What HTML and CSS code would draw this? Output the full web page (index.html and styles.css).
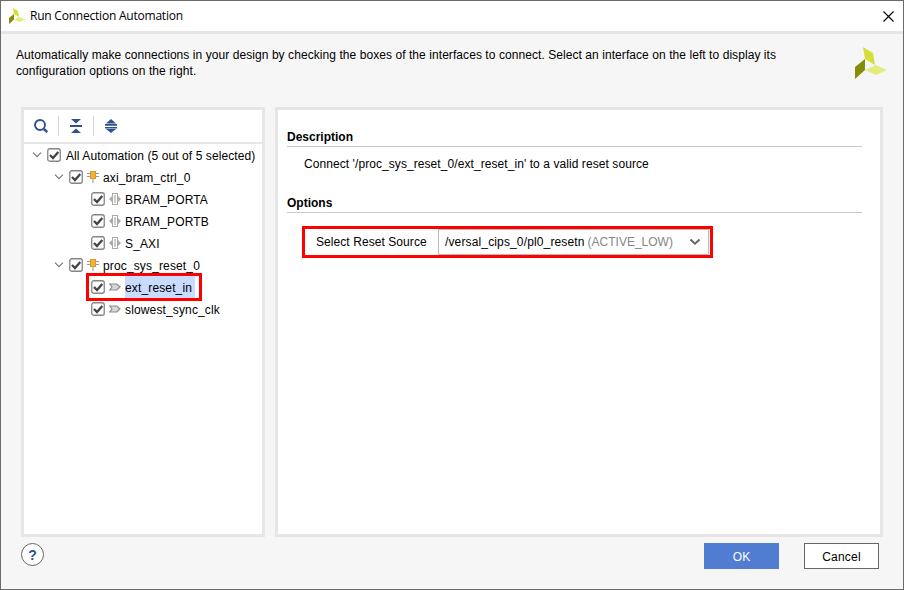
FILE: index.html
```
<!DOCTYPE html>
<html lang="en">
<head>
<meta charset="utf-8">
<title>Run Connection Automation</title>
<link rel="stylesheet" href="styles.css">
</head>
<body>
<svg class="defs" width="0" height="0">
  <symbol id="logo" viewBox="0 0 32 32"><path fill="#d4df35" d="M8 0l10 6 2 12-10-6z"/><path fill="#878b08" d="M0 20l10-8v11L0 32z"/><path fill="#e3eb7d" d="M10 23l11-5 11 5-11 5z"/></symbol>
  <symbol id="check" viewBox="0 0 14 14"><rect x=".75" y=".75" width="12.5" height="12.5" rx="2" fill="#fff" stroke="#858585" stroke-width="1.300"/><path d="M3 7l3 3 5.300-6" fill="none" stroke="#444" stroke-width="2.300"/></symbol>
  <symbol id="chev" viewBox="0 0 10 6"><path d="M1 .7l4 4 4-4" fill="none" stroke="#777" stroke-width="1.200"/></symbol>
  <symbol id="ip" viewBox="0 0 12 12"><path d="M0 2.500h12M0 5.500h12M6 8v4" stroke="#999" fill="none"/><rect x="3.500" y=".5" width="5" height="7" fill="#fdb02c" stroke="#d39a3c"/></symbol>
  <symbol id="bus" viewBox="0 0 12 12"><path d="M0 6l3-3v6zM12 6L9 3v6z" fill="#aaa"/><rect x="3.500" y=".5" width="5" height="11" fill="#fff" stroke="#aaa"/><path d="M6 2v8" stroke="#ccc" stroke-width="2"/></symbol>
  <symbol id="pin" viewBox="0 0 12 8"><path d="M.8 1h7L11 4 7.800 7h-7L3 4z" fill="#d8d8d8" stroke="#8c8c8c" stroke-width="1.200"/></symbol>
</svg>
<div class="dialog">
  <header class="titlebar">
    <svg class="app-icon"><use href="#logo"/></svg>
    <span class="title">Run Connection Automation</span>
    <svg class="close" viewBox="0 0 11 11"><path d="M.5.5l10 10M10.500.5l-10 10" stroke="#000" stroke-width="1.150"/></svg>
  </header>
  <div class="intro">
    <p><span class="line1">Automatically make connections in your design by checking the boxes of the interfaces to connect. Select an interface on the left to display its</span><br><span class="line2">configuration options on the right.</span></p>
    <svg class="brand"><use href="#logo"/></svg>
  </div>
  <main class="content">
    <section class="panel tree-panel">
      <div class="toolbar">
        <svg class="search" viewBox="0 0 16 16"><circle cx="7" cy="7" r="5" fill="none" stroke="#2f5190" stroke-width="1.900"/><path d="M10.800 10.800l3.400 3.400" stroke="#2f5190" stroke-width="2.600"/></svg>
        <i class="sep"></i>
        <svg class="tool" viewBox="0 0 12 14"><path d="M1 0h10L6 4.500zM0 6h12v2H0zM1 14h10L6 9.500z" fill="#2f5190"/></svg>
        <i class="sep"></i>
        <svg class="tool" viewBox="0 0 12 14"><path d="M1 4.500h10L6 0zM0 5h12v1.700H0zM0 8h12v1.500H0zM1 10h10l-5 4z" fill="#2f5190"/></svg>
      </div>
      <div class="tree">
        <div class="row"><svg class="chev"><use href="#chev"/></svg><svg class="check"><use href="#check"/></svg><span class="label root">All Automation (5 out of 5 selected)</span></div>
        <div class="row l1"><svg class="chev"><use href="#chev"/></svg><svg class="check"><use href="#check"/></svg><svg class="kind"><use href="#ip"/></svg><span class="label axi">axi_bram_ctrl_0</span></div>
        <div class="row l2"><svg class="check"><use href="#check"/></svg><svg class="kind"><use href="#bus"/></svg><span class="label port">BRAM_PORTA</span></div>
        <div class="row l2"><svg class="check"><use href="#check"/></svg><svg class="kind"><use href="#bus"/></svg><span class="label port">BRAM_PORTB</span></div>
        <div class="row l2"><svg class="check"><use href="#check"/></svg><svg class="kind"><use href="#bus"/></svg><span class="label">S_AXI</span></div>
        <div class="row l1"><svg class="chev"><use href="#chev"/></svg><svg class="check"><use href="#check"/></svg><svg class="kind"><use href="#ip"/></svg><span class="label proc">proc_sys_reset_0</span></div>
        <div class="row l2 marked"><svg class="check"><use href="#check"/></svg><svg class="kind pin"><use href="#pin"/></svg><span class="label selected">ext_reset_in</span></div>
        <div class="row l2"><svg class="check"><use href="#check"/></svg><svg class="kind pin"><use href="#pin"/></svg><span class="label clk">slowest_sync_clk</span></div>
      </div>
    </section>
    <section class="panel detail">
      <h2>Description</h2>
      <p class="description"><span>Connect '/proc_sys_reset_0/ext_reset_in' to a valid reset source</span></p>
      <h2>Options</h2>
      <div class="option">
        <span class="option-label">Select Reset Source</span>
        <div class="combo"><span class="value">/versal_cips_0/pl0_resetn</span><span class="hint">(ACTIVE_LOW)</span><svg class="arrow" viewBox="0 0 12 8"><path d="M1.500 1.500L6 5.700l4.500-4.200" fill="none" stroke="#666" stroke-width="2"/></svg></div>
      </div>
    </section>
  </main>
  <footer class="footer">
    <span class="help">?</span>
    <button class="btn ok">OK</button>
    <button class="btn cancel">Cancel</button>
  </footer>
</div>
</body>
</html>
```
FILE: styles.css
```
* { box-sizing: border-box; }
body { margin: 0; font: 12px/16px "Liberation Sans", Arial, sans-serif; color: #000; }
p, h2 { margin: 0; }
svg { display: block; flex: none; }
.defs { position: absolute; }
.dialog { width: 904px; height: 590px; border: 1px solid #6b6b6b; background: #f6f6f6; display: flex; flex-direction: column; overflow: hidden; }
.titlebar { height: 33px; flex: none; background: #fff; border-bottom: 3px solid #e6e6e6; display: flex; align-items: center; padding: 0 9px 0 8px; }
.app-icon { width: 16px; height: 16px; }
.title { font: 12px/16px "Open Sans", "Noto Sans", sans-serif; margin-left: 5px; letter-spacing: -.22px; }
.close { width: 11px; height: 11px; margin-left: auto; }
.intro { height: 73px; flex: none; display: flex; justify-content: space-between; padding: 13px 16px 0 15px; white-space: nowrap; }
.line1 { letter-spacing: .067px; }
.line2 { letter-spacing: .085px; }
.brand { width: 32px; height: 32px; }
.content { display: flex; gap: 10px; padding: 0 20px; height: 430px; flex: none; }
.panel { background: #fff; border: 3px solid #e6e6e6; }
.tree-panel { width: 244px; }
.toolbar { height: 34px; border-bottom: 2px solid #e6e6e6; display: flex; align-items: center; padding-left: 9px; }
.search { width: 16px; height: 16px; margin-right: 9px; }
.sep { width: 1px; height: 20px; background: #d6d6d6; }
.tool { width: 12px; height: 14px; margin: 0 11px; }
.tree { white-space: nowrap; }
.row { height: 22px; display: flex; align-items: center; padding-left: 8px; }
.l1 { padding-left: 30px; }
.l2 { padding-left: 67px; }
.chev { width: 10px; height: 6px; margin-right: 5px; }
.check { width: 14px; height: 14px; margin-right: 4px; }
.kind { width: 12px; height: 12px; margin-right: 4px; }
.pin { height: 8px; }
.label { padding-top: 2px; letter-spacing: .14px; }
.root { margin-left: 1px; letter-spacing: .09px; }
.marked { width: 116px; height: 28px; margin: -3px 0 -3px 62px; padding-left: 2px; border: 3px solid #f00; }
.selected { background: #c9dcff; height: 22px; line-height: 20px; width: 70px; }
.detail { flex: 1; padding: 18px 18px 0 9px; }
h2 { font-size: 12px; line-height: 19px; height: 19px; border-bottom: 1px solid #c9c9c9; }
.description { padding-left: 17px; height: 47px; line-height: 34px; letter-spacing: .073px; }
.option { width: 411px; height: 32px; border: 3px solid #f00; margin: 13px 0 0 15px; display: flex; padding-left: 11px; align-items: center; white-space: nowrap; }
.option-label { width: 122px; letter-spacing: .07px; }
.combo { width: 271px; height: 26px; border: 1px solid #b9b9b9; display: flex; align-items: center; padding: 0 7px 0 6px; }
.value { letter-spacing: .14px; }
.hint { color: #858585; margin-left: 3px; }
.arrow { width: 12px; height: 8px; margin-left: auto; }
.footer { display: flex; padding: 6px 24px 0 20px; align-items: flex-start; }
.help { width: 23px; height: 23px; border: 1px solid #666; border-radius: 50%; background: #fff; color: #2f5190; font: bold 14px/23px "Liberation Sans", Arial, sans-serif; text-align: center; }
.btn { width: 75px; height: 26px; padding: 2px 0 0; border: 1px solid #666; background: #fff; font: 12px/22px "Liberation Sans", Arial, sans-serif; color: #000; letter-spacing: .2px; }
.ok { margin-left: auto; background: #507cd1; border-color: #507cd1; color: #fff; letter-spacing: 0; }
.cancel { margin-left: 25px; }
```
